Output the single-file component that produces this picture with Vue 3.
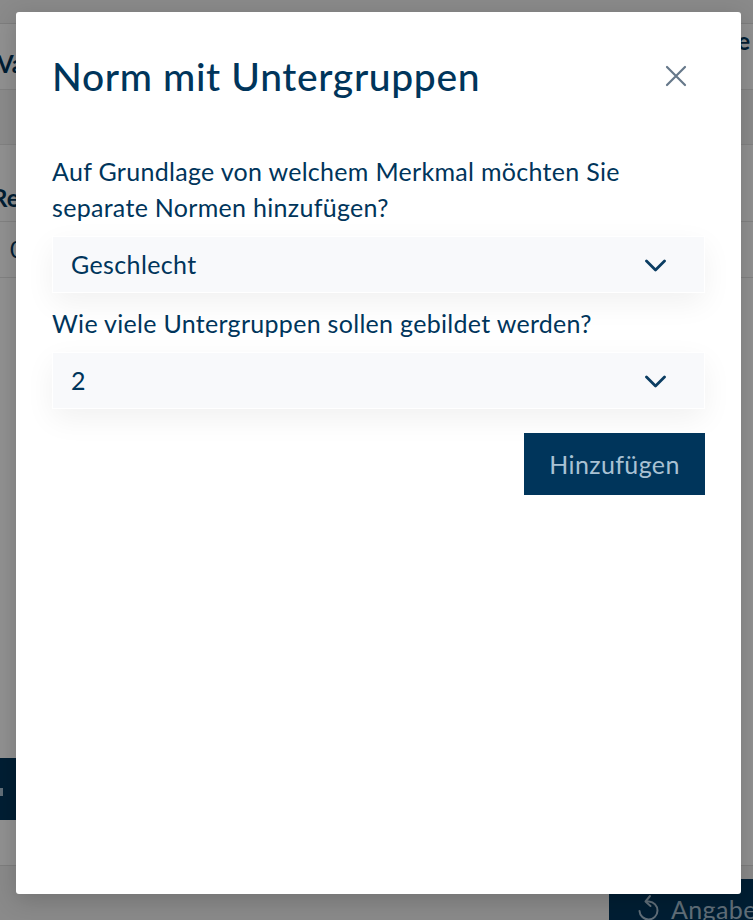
<script setup>
import { ref } from "vue";

const title = ref("Norm mit Untergruppen");
const fields = ref([
  { id: 1, label: "Auf Grundlage von welchem Merkmal möchten Sie separate Normen hinzufügen?", value: "Geschlecht" },
  { id: 2, label: "Wie viele Untergruppen sollen gebildet werden?", value: "2" },
]);
</script>

<template>
  <div class="page">
    <div class="top-bar"></div>
    <div class="head-row">
      <span class="bold-text first">Va</span>
      <span class="bold-text right-word">e</span>
    </div>
    <div class="plain-row"></div>
    <div class="head-row second">
      <span class="bold-text re">Re</span>
    </div>
    <div class="value-row">0</div>
    <div class="filler">
      <div class="back-btn"><span class="dot"></span></div>
    </div>
    <div class="footer">
      <div class="reset-btn">
        <svg class="reset-icon" width="24" height="28" viewBox="0 0 24 28" fill="none">
          <path d="M11 7.5h2a9 9 0 1 1-9.5 9.5" stroke="#a9c1d3" stroke-width="2" stroke-linecap="round" />
          <path d="M14 2 9.5 7.5l5 4.5" stroke="#a9c1d3" stroke-width="2" stroke-linecap="round" stroke-linejoin="round" />
        </svg>
        <span>Angaben</span>
      </div>
    </div>

    <div class="overlay"></div>

    <div class="modal">
      <div class="modal-head">
        <h2>{{ title }}</h2>
        <button class="close" aria-label="Schließen">
          <svg width="22" height="22" viewBox="0 0 22 22" fill="none">
            <path d="M2 2l18 18M20 2 2 20" stroke="#66788a" stroke-width="2.2" stroke-linecap="round" />
          </svg>
        </button>
      </div>

      <div v-for="field in fields" :key="field.id" class="field">
        <label>{{ field.label }}</label>
        <div class="select">
          <span>{{ field.value }}</span>
          <svg class="chevron" width="21" height="14" viewBox="0 0 21 14" fill="none">
            <path d="M1.5 2 10.5 11 19.5 2" stroke="#0b3d62" stroke-width="2.8" stroke-linecap="round" stroke-linejoin="round" />
          </svg>
        </div>
      </div>

      <div class="actions">
        <button class="add">Hinzufügen</button>
      </div>
    </div>
  </div>
</template>

<style>
html,
body {
  margin: 0;
  overflow: hidden;
}
</style>

<style scoped>
.page {
  position: relative;
  width: 753px;
  height: 920px;
  overflow: hidden;
  display: flex;
  flex-direction: column;
  background: #fff;
  font-family: Lato, "Liberation Sans", sans-serif;
  color: #00355b;
}

.top-bar {
  height: 24px;
  border-bottom: 1px solid #ddd;
  box-sizing: border-box;
  background: #f2f2f2;
}

.head-row {
  height: 66px;
  box-sizing: border-box;
  display: flex;
  justify-content: space-between;
  align-items: flex-end;
  padding-bottom: 10px;
  border-bottom: 1px solid #e4e4e4;
}

.head-row.second {
  height: 77px;
  padding-bottom: 8px;
}

.bold-text {
  font-size: 24px;
  font-weight: 700;
  line-height: 30px;
}

.first {
  margin-left: -3px;
}

.re {
  margin-left: -8px;
}

.right-word {
  margin-right: 3px;
  margin-bottom: 23px;
}

.plain-row {
  height: 55px;
  border-bottom: 1px solid #e4e4e4;
  box-sizing: border-box;
  background: #f4f4f4;
}

.value-row {
  height: 56px;
  box-sizing: border-box;
  padding: 12px 0 0 10px;
  font-size: 24px;
  border-bottom: 1px solid #e4e4e4;
}

.filler {
  flex: 1;
  padding-top: 480px;
  border-bottom: 1px solid #ddd;
}

.back-btn {
  width: 40px;
  height: 62px;
  background: #00355b;
  display: flex;
  align-items: center;
}

.dot {
  width: 3px;
  height: 8px;
  margin-top: 6px;
  background: #a9c1d3;
}

.footer {
  height: 54px;
  box-sizing: border-box;
  background: #f2f2f2;
  display: flex;
  justify-content: flex-end;
  padding-top: 13px;
}

.reset-btn {
  width: 144px;
  height: 62px;
  background: #00355b;
  display: flex;
  align-items: flex-start;
  gap: 11px;
  box-sizing: border-box;
  padding: 15px 0 0 27px;
  color: #a9c1d3;
  font-size: 25px;
  letter-spacing: 0.38px;
  line-height: 30px;
  white-space: nowrap;
}

.reset-icon {
  flex: none;
}

.overlay {
  position: absolute;
  inset: 0;
  background: rgba(0, 0, 0, 0.43);
}

.modal {
  position: absolute;
  left: 16px;
  top: 12px;
  width: 725px;
  height: 882px;
  box-sizing: border-box;
  padding: 36px 36px 0;
  background: #fff;
  border-radius: 3px;
  box-shadow: 0 6px 24px rgba(0, 0, 0, 0.18);
}

.modal-head {
  display: flex;
  justify-content: space-between;
  align-items: center;
  height: 58px;
  margin-bottom: 47px;
}

h2 {
  margin: 0 0 2px;
  font-size: 39px;
  font-weight: 500;
  line-height: 56px;
  letter-spacing: 0.65px;
}

.close {
  border: none;
  background: none;
  padding: 0;
  display: flex;
  margin: -2px 18px 0 0;
}

.field {
  margin-bottom: 13px;
}

label {
  display: block;
  font-size: 25px;
  letter-spacing: 0.3px;
  line-height: 36px;
  margin-bottom: 11px;
}

.select {
  height: 57px;
  margin-bottom: -1px;
  box-sizing: border-box;
  border: 1px solid #fff;
  background: #f8f9fb;
  box-shadow: 0 10px 30px rgba(0, 0, 0, 0.06);
  display: flex;
  align-items: center;
  justify-content: space-between;
  padding: 0 38px 2px 18px;
  font-size: 25px;
  letter-spacing: 0.38px;
}

.chevron {
  margin-top: 4px;
}

.actions {
  display: flex;
  justify-content: flex-end;
  margin-top: 25px;
}

.add {
  width: 181px;
  height: 62px;
  border: none;
  background: #00355b;
  color: #a9c1d3;
  font-family: inherit;
  font-size: 25px;
  letter-spacing: 0.38px;
}
</style>
